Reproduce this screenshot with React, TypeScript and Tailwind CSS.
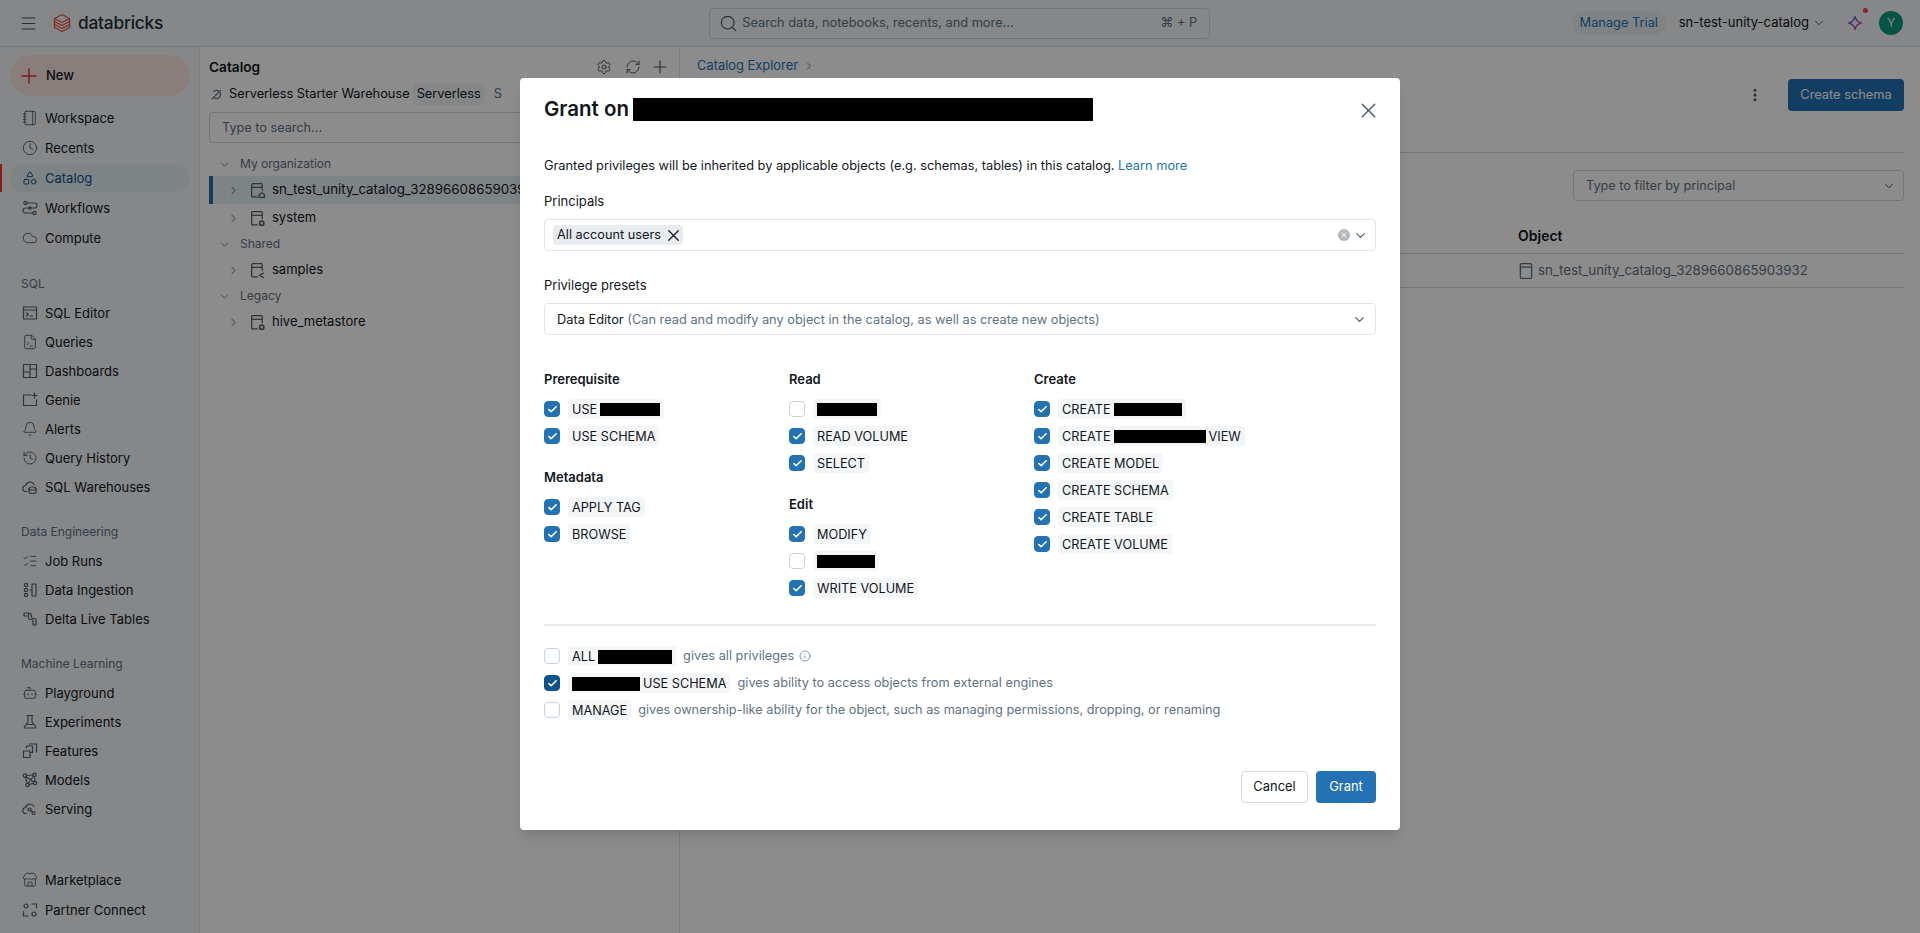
import React from 'react';
import {
  Bell, Bot, Check, ChevronDown, ChevronRight, Clock, Cloud, EllipsisVertical, FileTerminal, History,
  Info, ListChecks, Menu, Notebook, Plus, RefreshCw, Search, Settings, Shapes, Store, X,
} from 'lucide-react';

const Glyph: React.FC<{ children: React.ReactNode; size?: number; className?: string }> = ({ children, size = 16, className }) => (
  <svg width={size} height={size} viewBox="0 0 16 16" fill="none" stroke="currentColor" strokeWidth="1.2" strokeLinecap="round" strokeLinejoin="round" className={className}>
    {children}
  </svg>
);

const icons: Record<string, React.ReactNode> = {
  workspace: <Notebook size={16} strokeWidth={1.4} />,
  recents: <Clock size={16} strokeWidth={1.4} />,
  catalog: <Shapes size={16} strokeWidth={1.5} />,
  workflows: (
    <Glyph>
      <circle cx="3.5" cy="3" r="1.6" /><circle cx="12.5" cy="13" r="1.6" /><path d="M5 3h7.5a2.4 2.4 0 0 1 0 5h-9a2.4 2.4 0 0 0 0 5H11" /><circle cx="8" cy="8" r="1.2" />
    </Glyph>
  ),
  compute: <Cloud size={16} strokeWidth={1.4} />,
  sqlEditor: (
    <Glyph>
      <rect x="1.5" y="2" width="13" height="12" /><path d="M1.5 5h13M4.5 8l1.8 1.5-1.8 1.5M8 11h2.5" />
    </Glyph>
  ),
  queries: <FileTerminal size={16} strokeWidth={1.4} />,
  dashboards: (
    <Glyph>
      <rect x="1.5" y="1.5" width="13" height="13" /><path d="M8 1.5v13M1.5 9h6.5M8 6h6.5" />
    </Glyph>
  ),
  genie: (
    <Glyph>
      <path d="M9 3H1.5v10.5h13V8" /><path d="M12.5 1v5M10 3.5h5" />
    </Glyph>
  ),
  alerts: <Bell size={16} strokeWidth={1.4} />,
  history: <History size={16} strokeWidth={1.4} />,
  warehouses: (
    <Glyph>
      <path d="M5 12.5H4a3 3 0 0 1-.4-6A4.5 4.5 0 0 1 12 5.5" /><ellipse cx="10.5" cy="9.5" rx="3.5" ry="1.5" /><path d="M7 9.5v3.5c0 .8 1.6 1.5 3.5 1.5s3.5-.7 3.5-1.5V9.5" />
    </Glyph>
  ),
  jobRuns: <ListChecks size={16} strokeWidth={1.4} />,
  ingestion: (
    <Glyph>
      <circle cx="4" cy="3" r="1.7" /><circle cx="4" cy="8" r="1.7" /><circle cx="4" cy="13" r="1.7" /><path d="M8 8h2M11 2h3v12h-3M10 2v12" />
    </Glyph>
  ),
  dlt: (
    <Glyph>
      <path d="M2 2h4.5v5c0 1 .5 1.5 1.5 1.5h1.5c1 0 1.5.5 1.5 1.5v4h3v-5c0-1-.5-1.5-1.5-1.5H11c-1 0-1.5-.5-1.5-1.5V5C9.500 3 8 2 6.500 2M2 2v3h3" />
    </Glyph>
  ),
  playground: <Bot size={16} strokeWidth={1.4} />,
  experiments: (
    <Glyph>
      <path d="M5 1.500h6M6 1.500V8L2.500 12.500c-.6.9 0 1.500 1 1.500h9c1 0 1.600-.6 1-1.500L10 8V1.500M4.500 10.500h7" />
    </Glyph>
  ),
  features: (
    <Glyph>
      <rect x="1.500" y="8" width="6.500" height="6.500" /><path d="M4.500 5V3h6v6.500H8M7.500 1h7v8" />
    </Glyph>
  ),
  models: (
    <Glyph>
      <circle cx="3" cy="3.500" r="1.700" /><circle cx="12.500" cy="2.800" r="1.700" /><circle cx="5.500" cy="13" r="1.700" /><circle cx="13" cy="11" r="1.700" /><path d="M4.700 3.500l6.100-.5M3.500 5.200l1.600 6.100M12.600 4.500l.3 4.800M7.200 12.500l4.100-1.100M4.500 5l7 5M11.500 4l-5.400 7.300" />
    </Glyph>
  ),
  serving: (
    <Glyph>
      <path d="M4.500 12.500H4a3 3 0 0 1-.4-6A4.500 4.500 0 0 1 12 5.500" /><circle cx="7.500" cy="8.500" r="1.500" /><circle cx="11.500" cy="12" r="1.500" /><path d="M8.700 9.500l1.700 1.500" />
    </Glyph>
  ),
  marketplace: <Store size={16} strokeWidth={1.4} />,
  partner: (
    <Glyph>
      <circle cx="4" cy="4" r="2" /><circle cx="12" cy="12" r="2" /><path d="M10 2h4.500v4M6 14H1.500V9.500" />
    </Glyph>
  ),
};

const NavItem: React.FC<{ icon: string; label: string; tall?: boolean }> = ({ icon, label, tall }) => (
  <div className={`flex items-center gap-[7px] pl-[21px] text-[13px] text-[#11171c] ${tall ? 'h-[30px]' : 'h-[29px]'}`}>
    <span className="flex w-[17px] justify-center text-[#52636f]">{icons[icon]}</span>
    <span className="pt-[2px]">{label}</span>
  </div>
);

const NavLabel: React.FC<{ label: string; top: string }> = ({ label, top }) => (
  <div className={`flex h-[20px] items-center pl-[21px] text-[12px] text-[#5f7281] ${top}`}>{label}</div>
);

const Sidebar: React.FC = () => (
  <aside className="flex w-[200px] shrink-0 flex-col border-r border-[#e0e6eb] bg-[#f2f6f9]">
    <div className="mx-[10px] mt-[8px] flex h-[41px] w-[180px] items-center gap-[5px] rounded-full bg-[#fbe6e3] pl-[7px] text-[13px] font-medium text-[#11171c]">
      <Plus size={24} strokeWidth={1.5} className="text-[#e0392a]" />
      New
    </div>
    <div className="mt-[7px] flex flex-col">
      <NavItem tall icon="workspace" label="Workspace" />
      <NavItem tall icon="recents" label="Recents" />
      <div className="relative flex h-[30px] items-center">
        <span className="absolute left-0 top-[1px] h-[28px] w-[2px] bg-[#ff3621]" />
        <div className="mx-[10px] flex h-[28px] w-[180px] items-center gap-[7px] rounded-full bg-[#e6eef4] pl-[11px] text-[13px] text-[#0e538b]">
          <span className="flex w-[17px] justify-center">{icons.catalog}</span>
          <span className="pt-[2px]">Catalog</span>
        </div>
      </div>
      <NavItem tall icon="workflows" label="Workflows" />
      <NavItem tall icon="compute" label="Compute" />
    </div>
    <NavLabel label="SQL" top="mt-[21px]" />
    <div className="mt-[4px] flex flex-col">
      <NavItem icon="sqlEditor" label="SQL Editor" />
      <NavItem icon="queries" label="Queries" />
      <NavItem icon="dashboards" label="Dashboards" />
      <NavItem icon="genie" label="Genie" />
      <NavItem icon="alerts" label="Alerts" />
      <NavItem icon="history" label="Query History" />
      <NavItem icon="warehouses" label="SQL Warehouses" />
    </div>
    <NavLabel label="Data Engineering" top="mt-[21px]" />
    <div className="mt-[4px] flex flex-col">
      <NavItem icon="jobRuns" label="Job Runs" />
      <NavItem icon="ingestion" label="Data Ingestion" />
      <NavItem icon="dlt" label="Delta Live Tables" />
    </div>
    <NavLabel label="Machine Learning" top="mt-[21px]" />
    <div className="mt-[4px] flex flex-col">
      <NavItem icon="playground" label="Playground" />
      <NavItem icon="experiments" label="Experiments" />
      <NavItem icon="features" label="Features" />
      <NavItem icon="models" label="Models" />
      <NavItem icon="serving" label="Serving" />
    </div>
    <div className="mt-auto flex flex-col pb-[8px]">
      <NavItem tall icon="marketplace" label="Marketplace" />
      <NavItem tall icon="partner" label="Partner Connect" />
    </div>
  </aside>
);

const badges: Record<string, React.ReactNode> = {
  home: <path d="M9.500 12l2.500-2 2.500 2v2.500h-5z" />,
  gear: <circle cx="12" cy="12.500" r="2" strokeWidth="1.600" />,
  share: <path d="M9.800 12.500l3.700-2M9.800 12.500l3.700 2" />,
};

const CatalogRow: React.FC<{ label: string; badge: string; active?: boolean }> = ({ label, badge, active }) => (
  <div className={`relative flex h-[28px] items-center pl-[18px] text-[#11171c] ${active ? 'bg-[#e6eef4] text-[13.300px]' : 'text-[13px]'}`}>
    {active && <span className="absolute left-0 top-0 h-full w-[4px] bg-[#2272b4]" />}
    <ChevronRight size={13} strokeWidth={1.6} className="text-[#52636f]" />
    <Glyph size={17} className="ml-[9px] text-[#52636f]">
      <path d="M8 14H3.500a1 1 0 0 1-1-1V2.500a1 1 0 0 1 1-1h8a1 1 0 0 1 1 1V8M2.500 5h10" />
      {badges[badge]}
    </Glyph>
    <span className="ml-[6px] whitespace-nowrap">{label}</span>
  </div>
);

const TreeHeading: React.FC<{ label: string }> = ({ label }) => (
  <div className="flex h-[24px] items-center pl-[9px] text-[12px] text-[#5f7281]">
    <ChevronDown size={13} strokeWidth={1.6} />
    <span className="ml-[9px]">{label}</span>
  </div>
);

const CatalogPanel: React.FC = () => (
  <section className="flex w-[480px] shrink-0 flex-col border-r border-[#e0e6eb] bg-white px-[9px] pt-[10px]">
    <div className="flex h-[20px] items-center justify-between">
      <span className="text-[13.700px] font-semibold text-[#11171c]">Catalog</span>
      <div className="flex items-center text-[#46555f]">
        <Settings size={16} strokeWidth={1.4} className="mr-[13px]" />
        <RefreshCw size={16} strokeWidth={1.4} className="mr-[9px]" />
        <Plus size={20} strokeWidth={1.4} />
      </div>
    </div>
    <div className="mt-[5px] flex h-[24px] items-center text-[12.800px] text-[#11171c]">
      <Glyph size={11} className="ml-[2px] text-[#5f7281]">
        <path d="M2 14L14 2M4 3.500A6 6 0 0 1 14 8a6 6 0 0 1-9 5" strokeWidth="1.800" />
      </Glyph>
      <span className="ml-[7px]">Serverless Starter Warehouse</span>
      <span className="ml-[3px] rounded-[4px] bg-[#f2f5f7] px-[4px] py-[1px]">Serverless</span>
      <span className="ml-[9px] text-[#5f7281]">S</span>
    </div>
    <div className="mt-[6px] flex h-[31px] items-center rounded-[4px] border border-[#d1d9e1] pl-[12px] text-[12.700px] text-[#5f7281]">
      Type to search...
    </div>
    <div className="mt-[9px] flex flex-col">
      <TreeHeading label="My organization" />
      <CatalogRow active label="sn_test_unity_catalog_3289660865903932" badge="home" />
      <CatalogRow label="system" badge="gear" />
      <TreeHeading label="Shared" />
      <CatalogRow label="samples" badge="share" />
      <TreeHeading label="Legacy" />
      <CatalogRow label="hive_metastore" badge="gear" />
    </div>
  </section>
);

const TopBar: React.FC = () => (
  <header className="flex h-[47px] shrink-0 items-center border-b border-[#d8dfe5] bg-[#f2f6f9]">
    <Menu size={19} strokeWidth={1.4} className="ml-[19px] text-[#46555f]" />
    <svg width="18" height="20" viewBox="0 0 18 20" className="ml-[15px]" fill="none" stroke="#f0503c" strokeWidth="1.300" strokeLinejoin="round">
      <path d="M9 1.500L16.500 5.500 9 9.500 1.500 5.500z" />
      <path d="M1.500 5.500v3L9 12.500l7.500-4v-3" />
      <path d="M1.500 8.500v3L9 15.500l7.500-4v-3" />
      <path d="M1.500 11.500v3L9 18.500l7.500-4v-3" />
    </svg>
    <span className="ml-[7px] text-[17.300px] font-medium tracking-[-0.2px] text-[#1b3139]">databricks</span>
    <div className="ml-[546px] flex h-[31px] w-[501px] items-center rounded-[4px] border border-[#d1d9e1] bg-[#f2f6f9] pl-[9px] pr-[12px] text-[12.800px] text-[#5f7281]">
      <Search size={19} strokeWidth={1.4} className="text-[#46555f]" />
      <span className="ml-[4px]">Search data, notebooks, recents, and more...</span>
      <span className="ml-auto">⌘ + P</span>
    </div>
    <div className="ml-auto flex h-[24px] w-[94px] items-center justify-center rounded-full bg-[#e9eff4] text-[12.800px] text-[#2272b4]">
      Manage Trial
    </div>
    <span className="ml-[13px] text-[13px] text-[#11171c]">sn-test-unity-catalog</span>
    <ChevronDown size={14} strokeWidth={1.6} className="ml-[3px] text-[#46555f]" />
    <div className="relative ml-[21px] h-[16px] w-[16px]">
      <svg width="16" height="16" viewBox="0 0 16 16" fill="none" strokeWidth="1.400" strokeLinejoin="round">
        <defs>
          <linearGradient id="sparkle" x1="0" y1="0" x2="1" y2="1">
            <stop offset="0%" stopColor="#5b6fe0" />
            <stop offset="100%" stopColor="#e04a9c" />
          </linearGradient>
        </defs>
        <path stroke="url(#sparkle)" d="M8 1.500C8.800 5.500 10.500 7.200 14.500 8 10.500 8.800 8.800 10.500 8 14.500 7.200 10.500 5.500 8.800 1.500 8 5.500 7.200 7.200 5.500 8 1.500z" />
      </svg>
      <span className="absolute right-[-5px] top-[-7px] h-[5px] w-[5px] rounded-full bg-[#ff3b5c]" />
    </div>
    <div className="ml-[16px] mr-[17px] flex h-[24px] w-[24px] items-center justify-center rounded-full bg-[#0b9a7c] text-[12px] text-white">Y</div>
  </header>
);

const Main: React.FC = () => (
  <main className="flex min-w-0 flex-1 flex-col bg-white pl-[17px] pr-[16px] pt-[9px]">
    <div className="flex h-[20px] items-center text-[12.900px] text-[#2272b4]">
      Catalog Explorer
      <ChevronRight size={12} strokeWidth={1.6} className="ml-[5px] text-[#5f7281]" />
    </div>
    <div className="mt-[3px] flex h-[32px] items-center justify-end">
      <EllipsisVertical size={16} strokeWidth={2.5} className="mr-[25px] text-[#46555f]" />
      <div className="flex h-[32px] w-[116px] items-center justify-center rounded-[4px] bg-[#2272b4] text-[12.800px] text-white">Create schema</div>
    </div>
    <div className="mt-[41px] border-b border-[#d1d9e1]" />
    <div className="mt-[17px] flex justify-end">
      <div className="flex h-[31px] w-[331px] items-center justify-between rounded-[4px] border border-[#d1d9e1] pl-[12px] pr-[7px] text-[12.700px] text-[#5f7281]">
        Type to filter by principal
        <ChevronDown size={14} strokeWidth={1.6} className="text-[#46555f]" />
      </div>
    </div>
    <div className="mt-[19px] grid h-[34px] grid-cols-[821px_1fr] items-center border-b border-[#d1d9e1] pb-[2px] text-[14px] font-semibold text-[#11171c]">
      <span>Type</span>
      <span>Object</span>
    </div>
    <div className="grid h-[34px] grid-cols-[821px_1fr] items-center border-b border-[#d1d9e1] text-[13.300px] text-[#5f7281]">
      <span />
      <span className="flex items-center gap-[3px]">
        <Glyph size={18} className="ml-[-1px]"><rect x="3" y="1.500" width="10" height="13" rx="1" /><path d="M3 4.500h10" /></Glyph>
        sn_test_unity_catalog_3289660865903932
      </span>
    </div>
  </main>
);

const Redact: React.FC<{ width: string; tall?: boolean }> = ({ width, tall }) => (
  <span className={`inline-block bg-black ${width} ${tall ? 'h-[14px]' : 'h-[13px]'}`} />
);

const Box: React.FC<{ checked?: boolean; dark?: boolean }> = ({ checked, dark }) => (
  <span
    className={`flex h-[16px] w-[16px] shrink-0 items-center justify-center rounded-[4px] border ${
      checked ? (dark ? 'border-[#0e538b] bg-[#0e538b] text-white' : 'border-[#2272b4] bg-[#2272b4] text-white') : 'border-[#c8d2da] bg-white'
    }`}
  >
    {checked && <Check size={11} strokeWidth={3.500} />}
  </span>
);

const Priv: React.FC<{ checked?: boolean; dark?: boolean; children: React.ReactNode; note?: React.ReactNode }> = ({ checked, dark, children, note }) => (
  <div className="flex h-[20px] items-center">
    <Box checked={checked} dark={dark} />
    <span className="ml-[8px] flex h-[20px] items-center gap-[3px] whitespace-nowrap rounded-[4px] bg-[#f4f5f7] px-[4px] pt-[1px] text-[12.700px] text-[#11171c]">{children}</span>
    {note}
  </div>
);

const Note: React.FC<{ children: React.ReactNode }> = ({ children }) => (
  <span className="ml-[7px] flex items-center gap-[5px] whitespace-nowrap text-[12.750px] text-[#5f7281]">{children}</span>
);

const GroupTitle: React.FC<{ label: string; top?: boolean }> = ({ label, top }) => (
  <div className={`mb-[10px] flex h-[20px] items-center pt-[1px] text-[13px] font-semibold text-[#11171c] ${top ? '' : 'mt-[21px]'}`}>{label}</div>
);

const GrantDialog: React.FC = () => (
  <div className="absolute inset-0 flex justify-center bg-black/45 pt-[78px]">
    <div className="flex h-[752px] w-[880px] flex-col rounded-[4px] bg-white px-[24px] pb-[27px] pt-[15px] shadow-lg">
      <div className="flex h-[32px] items-center">
        <span className="text-[20.500px] font-semibold text-[#11171c]">Grant on</span>
        <span className="ml-[4px] h-[23px] w-[460px] bg-black" />
        <X size={25} strokeWidth={1.3} className="ml-auto mr-[-5px] mt-[2px] text-[#46555f]" />
      </div>
      <p className="mt-[31px] flex h-[20px] items-center whitespace-pre text-[12.800px] text-[#11171c]">
        Granted privileges will be inherited by applicable objects (e.g. schemas, tables) in this catalog. <span className="text-[#2272b4]">Learn more</span>
      </p>
      <div className="mt-[15px] flex h-[20px] items-center pt-[1px] text-[13px] text-[#11171c]">Principals</div>
      <div className="mt-[8px] flex h-[32px] items-center rounded-[4px] border border-[#dfe4e9] pl-[8px] pr-[6px]">
        <span className="flex h-[20px] w-[130px] items-center justify-between rounded-[4px] bg-[#e8ecf0] pl-[4px] text-[12.750px] text-[#11171c]">
          All account users
          <X size={19} strokeWidth={1.6} />
        </span>
        <span className="ml-auto flex h-[12px] w-[12px] items-center justify-center rounded-full bg-[#b5b9bc] text-white">
          <X size={8} strokeWidth={3} />
        </span>
        <ChevronDown size={15} strokeWidth={1.7} className="ml-[3px] mr-[1px] text-[#46555f]" />
      </div>
      <div className="mt-[24px] flex h-[20px] items-center pt-[1px] text-[13px] text-[#11171c]">Privilege presets</div>
      <div className="mt-[8px] flex h-[32px] items-center justify-between rounded-[4px] border border-[#dfe4e9] pl-[12px] pr-[8px] pt-[1px] text-[12.800px] text-[#11171c]">
        <span>Data Editor <span className="text-[#5f7281]">(Can read and modify any object in the catalog, as well as create new objects)</span></span>
        <ChevronDown size={15} strokeWidth={1.7} className="text-[#46555f]" />
      </div>
      <div className="mt-[34px] grid grid-cols-[245px_245px_1fr]">
        <div className="flex flex-col">
          <GroupTitle top label="Prerequisite" />
          <div className="flex flex-col gap-[7px]">
            <Priv checked>USE <Redact width="w-[60px]" /></Priv>
            <Priv checked>USE SCHEMA</Priv>
          </div>
          <GroupTitle label="Metadata" />
          <div className="flex flex-col gap-[7px]">
            <Priv checked>APPLY TAG</Priv>
            <Priv checked>BROWSE</Priv>
          </div>
        </div>
        <div className="flex flex-col">
          <GroupTitle top label="Read" />
          <div className="flex flex-col gap-[7px]">
            <Priv><Redact width="w-[60px]" /></Priv>
            <Priv checked>READ VOLUME</Priv>
            <Priv checked>SELECT</Priv>
          </div>
          <GroupTitle label="Edit" />
          <div className="flex flex-col gap-[7px]">
            <Priv checked>MODIFY</Priv>
            <Priv><Redact width="w-[58px]" /></Priv>
            <Priv checked>WRITE VOLUME</Priv>
          </div>
        </div>
        <div className="flex flex-col">
          <GroupTitle top label="Create" />
          <div className="flex flex-col gap-[7px]">
            <Priv checked>CREATE <Redact width="w-[68px]" /></Priv>
            <Priv checked>CREATE <Redact width="w-[92px]" /> VIEW</Priv>
            <Priv checked>CREATE MODEL</Priv>
            <Priv checked>CREATE SCHEMA</Priv>
            <Priv checked>CREATE TABLE</Priv>
            <Priv checked>CREATE VOLUME</Priv>
          </div>
        </div>
      </div>
      <div className="mt-[26px] h-[2px] bg-[#e8ecf0]" />
      <div className="mt-[20px] flex flex-col gap-[7px]">
        <Priv note={<Note>gives all privileges <Info size={12} strokeWidth={1.5} /></Note>}>ALL <Redact width="w-[74px]" tall /></Priv>
        <Priv checked dark note={<Note>gives ability to access objects from external engines</Note>}><Redact width="w-[68px]" tall />USE SCHEMA</Priv>
        <Priv note={<Note>gives ownership-like ability for the object, such as managing permissions, dropping, or renaming</Note>}>MANAGE</Priv>
      </div>
      <div className="mt-auto flex justify-end gap-[8px]">
        <div className="flex h-[32px] w-[67px] items-center justify-center rounded-[4px] border border-[#d1d9e1] text-[12.900px] text-[#11171c]">Cancel</div>
        <div className="flex h-[32px] w-[60px] items-center justify-center rounded-[4px] bg-[#2272b4] text-[12.900px] text-white">Grant</div>
      </div>
    </div>
  </div>
);

export default function App() {
  return (
    <div className="relative flex h-[933px] w-[1920px] flex-col overflow-hidden bg-white font-[Inter,'Liberation_Sans',sans-serif]">
      <TopBar />
      <div className="flex min-h-0 flex-1">
        <Sidebar />
        <CatalogPanel />
        <Main />
      </div>
      <GrantDialog />
    </div>
  );
}
